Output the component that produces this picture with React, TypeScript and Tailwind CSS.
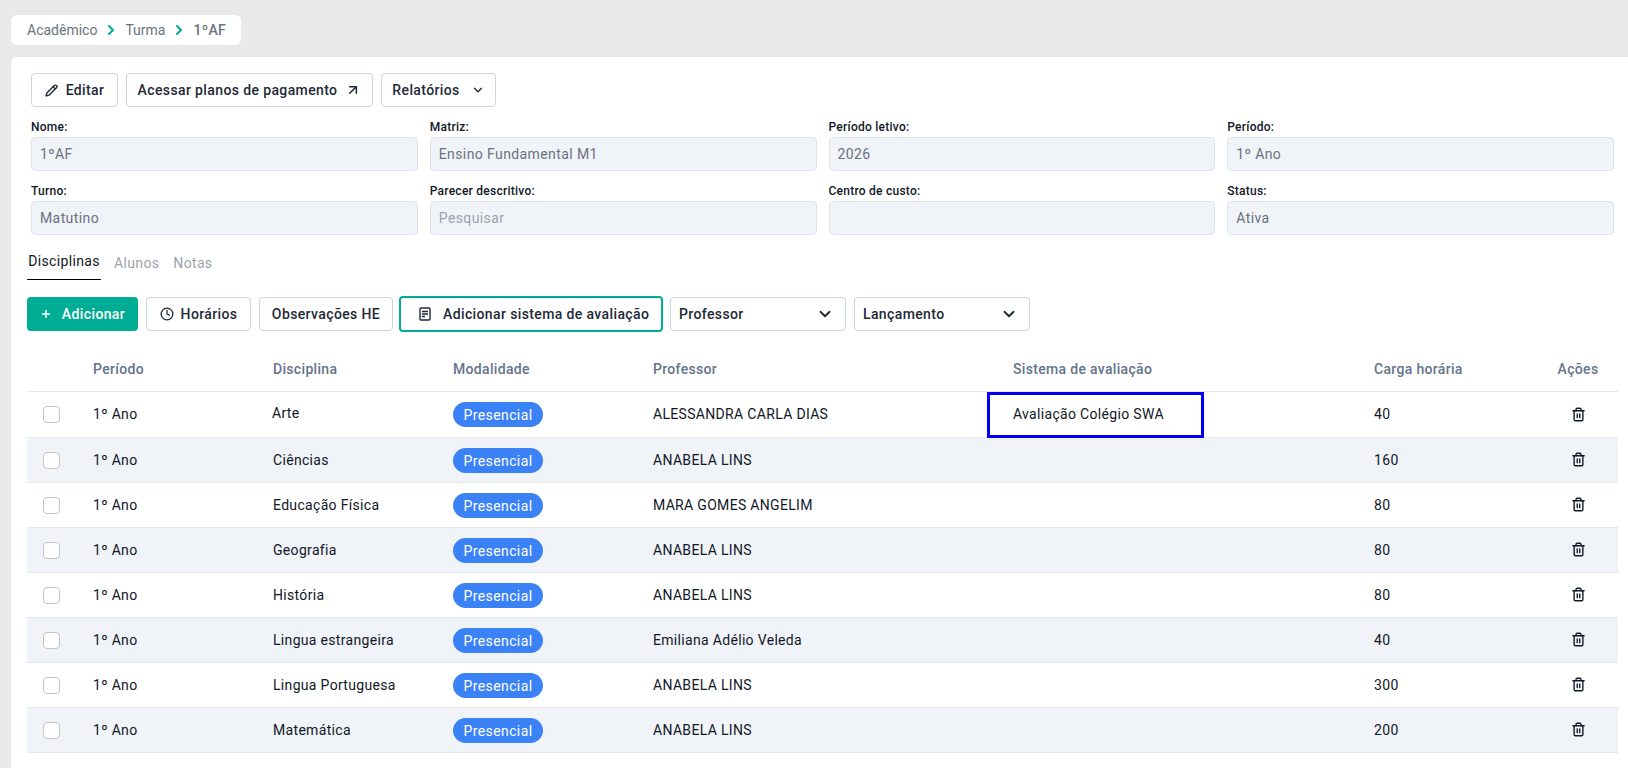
import { ArrowUpRight, ChevronDown, ChevronRight, Clock, Pencil, Plus, Trash2 } from 'lucide-react';

const fields = [
  { label: 'Nome:', value: '1ºAF' },
  { label: 'Matriz:', value: 'Ensino Fundamental M1' },
  { label: 'Período letivo:', value: '2026' },
  { label: 'Período:', value: '1º Ano' },
  { label: 'Turno:', value: 'Matutino' },
  { label: 'Parecer descritivo:', value: 'Pesquisar', placeholder: true },
  { label: 'Centro de custo:', value: '' },
  { label: 'Status:', value: 'Ativa' },
];

const rows = [
  { disciplina: 'Arte', professor: 'ALESSANDRA CARLA DIAS', sistema: 'Avaliação Colégio SWA', carga: '40' },
  { disciplina: 'Ciências', professor: 'ANABELA LINS', sistema: '', carga: '160' },
  { disciplina: 'Educação Física', professor: 'MARA GOMES ANGELIM', sistema: '', carga: '80' },
  { disciplina: 'Geografia', professor: 'ANABELA LINS', sistema: '', carga: '80' },
  { disciplina: 'História', professor: 'ANABELA LINS', sistema: '', carga: '80' },
  { disciplina: 'Lingua estrangeira', professor: 'Emiliana Adélio Veleda', sistema: '', carga: '40' },
  { disciplina: 'Lingua Portuguesa', professor: 'ANABELA LINS', sistema: '', carga: '300' },
  { disciplina: 'Matemática', professor: 'ANABELA LINS', sistema: '', carga: '200' },
];

const btn = 'flex h-[34px] items-center rounded border border-[#cbd5e1] bg-white text-sm font-medium text-[#1f2937] tracking-[0.38px]';

export default function App() {
  return (
    <div className="h-[768px] overflow-hidden bg-[#e9e9e9] pl-[11px] pt-[15px] font-['Roboto',sans-serif]">
      {/* Breadcrumb */}
      <div className="flex h-[30px] w-[230px] items-center rounded-md bg-white pl-[16px] text-sm text-[#6b7280]">
        <span>Acadêmico</span>
        <ChevronRight className="ml-[6px] mr-[6px] h-4 w-4 text-[#00ac93]" strokeWidth={3} />
        <span>Turma</span>
        <ChevronRight className="ml-[6px] mr-[6px] h-4 w-4 text-[#00ac93]" strokeWidth={3} />
        <span className="font-medium tracking-[0.3px]">1ºAF</span>
      </div>

      <div className="mt-[12px] h-[720px] rounded-tl-md bg-white pr-[10px] pt-[16px]">
        {/* Actions */}
        <div className="flex gap-2 pl-[20px]">
          <button className={`${btn} w-[87px] justify-center gap-[8px]`}>
            <Pencil className="h-[13px] w-[13px]" strokeWidth={2.6} />
            Editar
          </button>
          <button className={`${btn} w-[247px] justify-center gap-[8px]`}>
            Acessar planos de pagamento
            <ArrowUpRight className="h-4 w-4" strokeWidth={2.2} />
          </button>
          <button className={`${btn} w-[115px] justify-center gap-[11px]`}>
            Relatórios
            <ChevronDown className="h-[14px] w-[14px]" strokeWidth={2.2} />
          </button>
        </div>

        {/* Fields */}
        <div className="mr-[4px] mt-[10px] grid grid-cols-4 gap-x-[12px] gap-y-[10px] pl-[20px]">
          {fields.map((f) => (
            <div key={f.label}>
              <div className="text-xs leading-[20px] font-medium tracking-[0.25px] text-[#111827]">{f.label}</div>
              <div
                className={`flex h-[34px] items-center rounded border border-[#dfe4ec] bg-[#f0f3f8] px-[8px] text-sm tracking-[0.4px] ${
                  f.placeholder ? 'text-[#9ca3af]' : 'text-[#6b7280]'
                }`}
              >
                {f.value}
              </div>
            </div>
          ))}
        </div>

        {/* Tabs */}
        <div className="mt-[9px] flex pl-[16px] text-sm tracking-[0.35px]">
          <div className="h-[36px] w-[74px] border-b border-black pt-[7px] text-center text-[#111827]">Disciplinas</div>
          <div className="ml-[13px] pt-[9px] text-[#9ca3af]">Alunos</div>
          <div className="ml-[14px] pt-[9px] text-[#9ca3af]">Notas</div>
        </div>

        {/* Toolbar */}
        <div className="mt-[16px] flex items-center gap-2 pl-[16px]">
          <button className="flex h-[34px] w-[111px] items-center justify-center gap-[10px] rounded bg-[#00ac93] text-sm font-medium tracking-[0.38px] text-white">
            <Plus className="h-3 w-3" strokeWidth={3} />
            Adicionar
          </button>
          <button className={`${btn} w-[105px] justify-center gap-[7px]`}>
            <Clock className="h-[14px] w-[14px]" strokeWidth={2.2} />
            Horários
          </button>
          <button className={`${btn} w-[134px] justify-center`}>Observações HE</button>
          <button className="-ml-[2px] flex h-[36px] w-[264px] items-center gap-[11px] rounded border-2 border-[#00ac93] bg-white pl-[17px] text-sm font-medium tracking-[0.38px] text-[#1f2937]">
            <svg viewBox="0 0 14 14" className="h-[14px] w-[14px]" fill="none" stroke="currentColor" strokeWidth="1.4">
              <rect x="2" y="1" width="10" height="12" rx="1" />
              <path d="M4 4.5h6M4 7h6M4 9.5h3" />
            </svg>
            Adicionar sistema de avaliação
          </button>
          <div className={`${btn} -ml-px w-[176px] justify-between pl-[8px] pr-[11px]`}>
            Professor
            <ChevronDown className="h-[18px] w-[18px]" strokeWidth={2.5} />
          </div>
          <div className={`${btn} w-[176px] justify-between pl-[8px] pr-[11px]`}>
            Lançamento
            <ChevronDown className="h-[18px] w-[18px]" strokeWidth={2.5} />
          </div>
        </div>

        {/* Table */}
        <div className="mt-[7px] pl-[16px]">
          <table className="w-full table-fixed border-collapse text-sm tracking-[0.32px] text-[#111827]">
            <colgroup>
              <col className="w-[66px]" />
              <col className="w-[180px]" />
              <col className="w-[180px]" />
              <col className="w-[200px]" />
              <col className="w-[360px]" />
              <col className="w-[361px]" />
              <col />
              <col className="w-[80px]" />
            </colgroup>
            <thead>
              <tr className="h-[52px] border-b border-[#e5e7eb] text-left font-medium text-[#64748b]">
                <th></th>
                <th className="pt-[9px] font-medium">Período</th>
                <th className="pt-[9px] font-medium">Disciplina</th>
                <th className="pt-[9px] font-medium">Modalidade</th>
                <th className="pt-[9px] font-medium">Professor</th>
                <th className="pt-[9px] font-medium">Sistema de avaliação</th>
                <th className="pt-[9px] font-medium">Carga horária</th>
                <th className="pt-[9px] text-center font-medium">Ações</th>
              </tr>
            </thead>
            <tbody>
              {rows.map((r, i) => (
                <tr
                  key={r.disciplina}
                  className={`border-b border-[#e5e7eb] ${i === 0 ? 'h-[46px]' : 'h-[45px]'} ${i % 2 === 1 ? 'bg-[#f0f3f8]' : 'bg-white'}`}
                >
                  <td className="pl-[16px]">
                    <div className="mt-px h-[17px] w-[17px] rounded border border-[#c4c4c4] bg-white"></div>
                  </td>
                  <td>1º Ano</td>
                  <td>
                    <span className={i === 0 ? 'inline-block -translate-x-px -translate-y-px' : ''}>{r.disciplina}</span>
                  </td>
                  <td>
                    <span className="mt-px inline-flex h-[25px] w-[90px] items-center justify-center rounded-full bg-[#3b82f6] pt-px tracking-[0.4px] text-white">Presencial</span>
                  </td>
                  <td>{r.professor}</td>
                  <td className="relative">
                    {r.sistema}
                    {r.sistema && <div className="absolute -left-[26px] top-0 h-[46px] w-[217px] border-[3px] border-[#0000ee]"></div>}
                  </td>
                  <td>{r.carga}</td>
                  <td>
                    <Trash2 className="mx-auto h-[15px] w-[15px]" strokeWidth={2.2} />
                  </td>
                </tr>
              ))}
            </tbody>
          </table>
        </div>
      </div>
    </div>
  );
}
